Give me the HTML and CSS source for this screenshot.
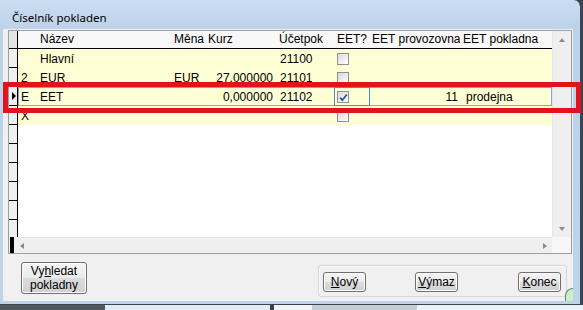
FILE: index.html
```html
<!DOCTYPE html>
<html lang="cs">
<head>
<meta charset="utf-8">
<title>Číselník pokladen</title>
<link rel="stylesheet" href="styles.css">
</head>
<body>
<div class="window">
  <div class="titlebar">Číselník pokladen</div>
  <div class="client">
    <div class="grid">
      <div class="grid-main">
        <div class="table">
          <div class="row head">
            <div class="ind"></div>
            <div class="cells">
              <div class="c c0"></div>
              <div class="c c1">Název</div>
              <div class="c c2">Měna</div>
              <div class="c c3 hl">Kurz</div>
              <div class="c c4">Účetpok</div>
              <div class="c c5 ht">EET?</div>
              <div class="c c6 hl">EET provozovna</div>
              <div class="c c7">EET pokladna</div>
            </div>
          </div>
          <div class="row data">
            <div class="ind"></div>
            <div class="cells">
              <div class="c c0"></div>
              <div class="c c1">Hlavní</div>
              <div class="c c2"></div>
              <div class="c c3 num"></div>
              <div class="c c4 acc">21100</div>
              <div class="c c5"><span class="cb"></span></div>
              <div class="c c6 num"></div>
              <div class="c c7 val"></div>
            </div>
          </div>
          <div class="row data">
            <div class="ind"></div>
            <div class="cells">
              <div class="c c0">2</div>
              <div class="c c1">EUR</div>
              <div class="c c2">EUR</div>
              <div class="c c3 num">27,000000</div>
              <div class="c c4 acc">21101</div>
              <div class="c c5"><span class="cb"></span></div>
              <div class="c c6 num"></div>
              <div class="c c7 val"></div>
            </div>
          </div>
          <div class="row data cur">
            <div class="ind"><span class="pointer"></span></div>
            <div class="cells">
              <div class="c c0">E</div>
              <div class="c c1">EET</div>
              <div class="c c2"></div>
              <div class="c c3 num">0,000000</div>
              <div class="c c4 acc">21102</div>
              <div class="c c5 focus"><span class="cb"><svg viewBox="0 0 11 11" width="11" height="11"><path d="M2.2 5.6 L4.4 8.2 L8.8 2.4" fill="none" stroke="#2d4c9c" stroke-width="1.7"/></svg></span></div>
              <div class="c c6 num">11</div>
              <div class="c c7 val">prodejna</div>
            </div>
          </div>
          <div class="row data">
            <div class="ind"></div>
            <div class="cells">
              <div class="c c0">X</div>
              <div class="c c1"></div>
              <div class="c c2"></div>
              <div class="c c3 num"></div>
              <div class="c c4 acc"></div>
              <div class="c c5"><span class="cb"></span></div>
              <div class="c c6 num"></div>
              <div class="c c7 val"></div>
            </div>
          </div>
          <div class="row empty"><div class="ind"></div></div>
          <div class="row empty"><div class="ind"></div></div>
          <div class="row empty"><div class="ind"></div></div>
          <div class="row empty"><div class="ind"></div></div>
          <div class="row empty"><div class="ind"></div></div>
          <div class="row empty"><div class="ind"></div></div>
        </div>
        <div class="vscroll"><span class="arr up"></span><span class="arr down"></span></div>
      </div>
      <div class="hrow">
        <div class="hind"><span class="bar"></span></div>
        <div class="hscroll"><span class="arr left"></span><span class="arr right"></span></div>
        <div class="corner"></div>
      </div>
    </div>
    <div class="footer">
      <button class="btn search">Vy<u>h</u>ledat<br>pokladny</button>
      <div class="groupbox">
        <button class="btn small b-new"><u>N</u>ový</button>
        <button class="btn small b-del"><u>V</u>ýmaz</button>
        <button class="btn small b-end"><u>K</u>onec</button>
      </div>
    </div>
    <div class="grip"></div>
  </div>
</div>
<div class="desktop">
  <span class="d1"></span><span class="d2"></span><span class="d3"></span><span class="d4"></span><span class="d5"></span><span class="d6"></span>
</div>
<div class="highlight"></div>
</body>
</html>
```
FILE: styles.css
```css
html, body {
  margin: 0;
  padding: 0;
}
body {
  width: 583px;
  height: 310px;
  overflow: hidden;
  background: #3b4450;
  position: relative;
  font-family: "Liberation Sans", Arial, sans-serif;
  font-size: 12px;
  color: #000;
}
.window {
  width: 580px;
  height: 304px;
  border-right: 1px solid #33475c;
  border-bottom: 1px solid #33475c;
  border-top-right-radius: 7px;
  background: linear-gradient(#cadcf0, #bcd2ea 30px, #bed4eb);
  display: flex;
  flex-direction: column;
}
.titlebar {
  height: 19px;
  padding: 10px 0 0 12px;
  font-family: "Noto Sans", "Liberation Sans", sans-serif;
  font-size: 11.5px;
  line-height: 15px;
  color: #000;
}
.client {
  position: relative;
  margin-left: 3px;
  width: 570px;
  height: 272px;
  background: #f0f0f0;
  display: flex;
  flex-direction: column;
}
.grid {
  margin: 1px 0 0 5px;
  width: 562px;
  height: 222px;
  border: 1px solid #9aa0a6;
  display: flex;
  flex-direction: column;
  background: #fff;
}
.grid-main {
  display: flex;
  height: 206px;
}
.table {
  width: 543px;
  overflow: hidden;
  background: #fff;
}
.row {
  display: flex;
  height: 19px;
}
.ind {
  box-sizing: border-box;
  width: 9px;
  height: 19px;
  flex: none;
  background: #f0f0f0;
  border-right: 1px solid #000;
  border-bottom: 1px solid #000;
  display: flex;
  align-items: center;
  justify-content: center;
}
.cells {
  display: flex;
  width: 534px;
}
.row.head {
  height: 18px;
  box-sizing: border-box;
  border-bottom: 1px solid #000;
  background: #f8f8f8;
}
.row.head .ind {
  height: 17px;
  border-bottom: none;
  background: #e4e4e4;
}
.row.data .cells {
  background: #ffffd6;
}
.c {
  flex: none;
  box-sizing: border-box;
  height: 100%;
  line-height: 18px;
  white-space: nowrap;
  overflow: hidden;
  padding-left: 3px;
  display: flex;
  align-items: center;
}
.head .c { line-height: 17px; }
.c0 { width: 18px; }
.c1 { width: 135px; padding-left: 4px; }
.c2 { width: 35px; }
.c3 { width: 70px; }
.c4 { width: 58px; }
.c5 { width: 36px; }
.c6 { width: 90px; }
.c7 { width: 92px; }
.hl { padding-left: 2px; }
.num {
  justify-content: flex-end;
  padding-left: 0;
  padding-right: 3px;
}
.c6.num { padding-right: 2px; }
.acc { padding-left: 4px; }
.val { padding-left: 6px; }
.cur .cells {
  box-shadow: inset 0 0 0 1px #7ea7d8;
}
.focus {
  box-shadow: inset 0 0 0 1px #4a8ad4;
}
.pointer {
  width: 0;
  height: 0;
  border-left: 4px solid #000;
  border-top: 4px solid transparent;
  border-bottom: 4px solid transparent;
  margin-left: 1px;
}
.cb {
  box-sizing: border-box;
  width: 12px;
  height: 12px;
  margin-left: 0;
  border: 1px solid #8e8f91;
  background: linear-gradient(135deg, #d8d9db, #f4f4f4 70%, #ffffff);
  display: block;
  position: relative;
}
.cb svg {
  position: absolute;
  left: 0;
  top: 0;
}
.vscroll {
  box-sizing: border-box;
  width: 19px;
  border-left: 1px solid #e6e6e6;
  background: #efefef;
  display: flex;
  flex-direction: column;
  justify-content: space-between;
  align-items: center;
  padding: 7px 0 6px;
}
.arr {
  width: 0;
  height: 0;
  display: block;
}
.arr.up {
  border-left: 3px solid transparent;
  border-right: 3px solid transparent;
  border-bottom: 4px solid #8a8a8a;
}
.arr.down {
  border-left: 3px solid transparent;
  border-right: 3px solid transparent;
  border-top: 4px solid #8a8a8a;
}
.hrow {
  display: flex;
  height: 16px;
}
.hind {
  width: 9px;
  background: #f0f0f0;
}
.bar {
  display: block;
  width: 4px;
  height: 16px;
  margin-left: 1px;
  background: #000;
}
.hscroll {
  box-sizing: border-box;
  width: 534px;
  background: #efefef;
  border-top: 1px solid #e4e4e4;
  display: flex;
  justify-content: space-between;
  align-items: center;
  padding: 0 5px 0 2px;
}
.arr.left {
  border-top: 3px solid transparent;
  border-bottom: 3px solid transparent;
  border-right: 4px solid #8a8a8a;
}
.arr.right {
  border-top: 3px solid transparent;
  border-bottom: 3px solid transparent;
  border-left: 4px solid #8a8a8a;
}
.corner {
  width: 19px;
  background: #f7f7f7;
}
.footer {
  display: flex;
  align-items: flex-start;
  margin-top: 8px;
  padding: 0 6px 0 18px;
}
.btn {
  box-sizing: border-box;
  margin: 0;
  padding: 0;
  font-family: "Liberation Sans", Arial, sans-serif;
  font-size: 12px;
  color: #000;
  border: 1px solid #707070;
  border-radius: 3px;
  background: linear-gradient(#f4f4f4, #ebebeb 50%, #dcdcdc 50%, #d0d0d0);
  box-shadow: inset 0 0 0 1px #fbfbfb;
}
.btn u { text-decoration: underline; }
.search {
  width: 66px;
  height: 32px;
  line-height: 14.5px;
}
.groupbox {
  box-sizing: border-box;
  margin: 3px 0 0 auto;
  width: 249px;
  height: 32px;
  border: 1px solid #d2d8de;
  border-radius: 3px;
  box-shadow: inset 1px 1px 0 #fafafa;
  display: flex;
  align-items: flex-start;
  padding: 6px 5px 0 4px;
}
.small {
  width: 43px;
  height: 20px;
  line-height: 17px;
}
.b-del { margin-left: 49px; }
.b-end { margin-left: 60px; }
.grip {
  position: absolute;
  left: 562px;
  top: 259px;
  width: 8px;
  height: 13px;
  box-sizing: border-box;
  background: #c9f1c6;
  border-top: 1px solid #6f7c70;
  border-left: 1px solid #6f7c70;
  border-top-left-radius: 8px;
}
.desktop {
  display: flex;
  height: 5px;
}
.desktop span { display: block; height: 5px; }
.d1 { width: 105px; background: #55595d; }
.d2 { width: 165px; background: #e4ebf3; }
.d3 { width: 4px; background: #3a3f46; }
.d4 { width: 38px; background: #f4f4f4; }
.d5 { width: 105px; background: #c9cdd2; }
.d6 { width: 166px; background: #eef2f6; }
.highlight {
  position: absolute;
  left: 3px;
  top: 82px;
  width: 578px;
  height: 31px;
  box-sizing: border-box;
  border: 5px solid #e2131c;
}
```
